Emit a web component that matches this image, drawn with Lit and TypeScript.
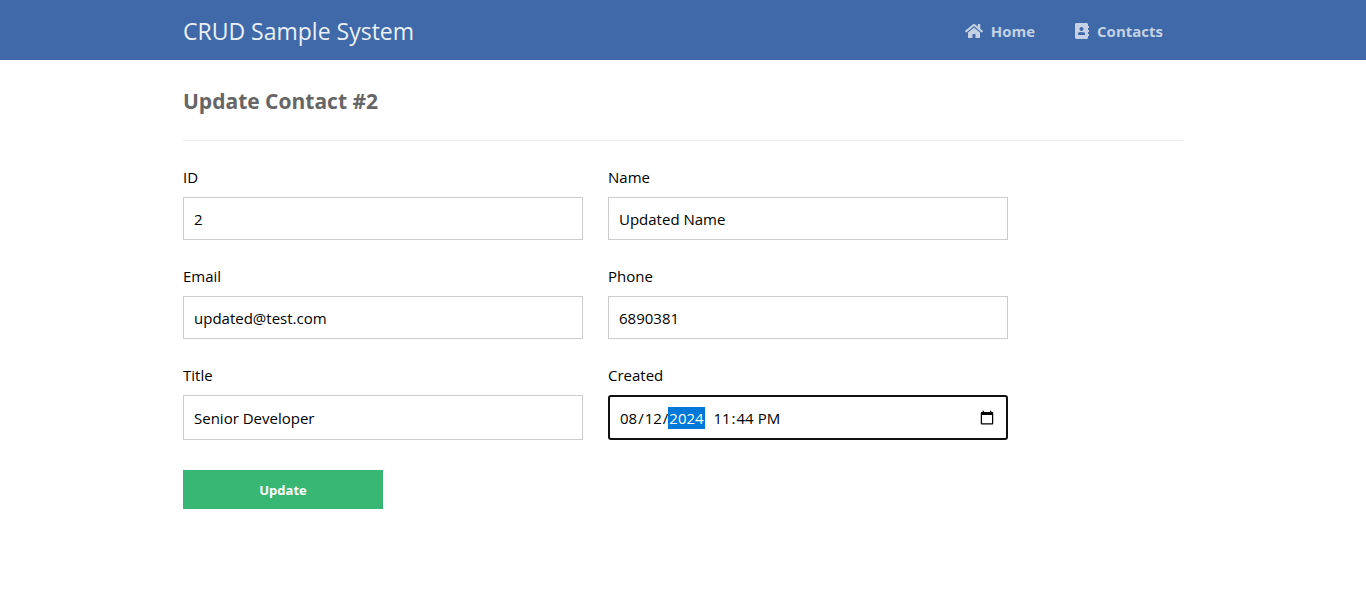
import { LitElement, html, css, svg } from "lit";
import { customElement } from "lit/decorators.js";

const homeIcon = svg`<path d="M280.37 148.26L96 300.11V464a16 16 0 0 0 16 16l112.06-.29a16 16 0 0 0 15.92-16V368a16 16 0 0 1 16-16h64a16 16 0 0 1 16 16v95.64a16 16 0 0 0 16 16.05L464 480a16 16 0 0 0 16-16V300L295.67 148.26a12.19 12.19 0 0 0-15.3 0zM571.6 251.47L488 182.56V44.05a12 12 0 0 0-12-12h-56a12 12 0 0 0-12 12v72.61L318.47 43a48 48 0 0 0-61 0L4.34 251.47a12 12 0 0 0-1.6 16.9l25.5 31A12 12 0 0 0 45.15 301l235.22-193.74a12.19 12.19 0 0 1 15.3 0L530.9 301a12 12 0 0 0 16.9-1.6l25.5-31a12 12 0 0 0-1.7-16.93z"/>`;

const bookIcon = svg`<path d="M436 160c6.6 0 12-5.4 12-12v-40c0-6.6-5.4-12-12-12h-20V48c0-26.5-21.5-48-48-48H48C21.5 0 0 21.5 0 48v416c0 26.5 21.5 48 48 48h320c26.5 0 48-21.5 48-48v-48h20c6.6 0 12-5.4 12-12v-40c0-6.6-5.4-12-12-12h-20v-64h20c6.6 0 12-5.4 12-12v-40c0-6.6-5.4-12-12-12h-20v-64h20zm-228-32c35.3 0 64 28.7 64 64s-28.7 64-64 64-64-28.7-64-64 28.7-64 64-64zm112 236.8c0 10.6-10 19.2-22.4 19.2H118.4C106 384 96 375.4 96 364.8v-19.2c0-31.8 30.1-57.6 67.2-57.6h5c12.3 5.1 25.7 8 39.8 8s27.6-2.9 39.8-8h5c37.1 0 67.2 25.8 67.2 57.6v19.2z"/>`;

interface Field {
  id: string;
  label: string;
  type: string;
  value: string;
}

const fields: Field[] = [
  { id: "id", label: "ID", type: "text", value: "2" },
  { id: "name", label: "Name", type: "text", value: "Updated Name" },
  { id: "email", label: "Email", type: "text", value: "updated@test.com" },
  { id: "phone", label: "Phone", type: "text", value: "6890381" },
  { id: "title", label: "Title", type: "text", value: "Senior Developer" },
  { id: "created", label: "Created", type: "datetime-local", value: "2024-08-12T23:44" },
];

@customElement("app-root")
export class AppRoot extends LitElement {
  static styles = css`
    :host {
      display: block;
      font-family: "Open Sans", "Noto Sans", sans-serif;
      font-size: 15px;
      color: #000;
    }
    * {
      box-sizing: border-box;
    }
    .topbar {
      background: #3f69a8;
    }
    .topbar-inner {
      display: flex;
      align-items: center;
      max-width: 1000px;
      height: 60px;
      margin: 0 auto;
      padding-top: 2px;
    }
    .brand {
      flex: 1;
      margin: 0;
      font-size: 23px;
      font-weight: 400;
      color: #ebf0f6;
    }
    .nav-link {
      display: flex;
      align-items: center;
      gap: 8px;
      padding: 0 20px;
      color: #c5d2e5;
      font-weight: 700;
      text-decoration: none;
    }
    .icon {
      height: 16px;
      fill: currentColor;
    }
    .content {
      max-width: 1000px;
      margin: 0 auto;
    }
    .heading {
      margin: 0;
      padding: 25px 0 23px;
      border-bottom: 1px solid #ebebeb;
      font-size: 21px;
      line-height: 32px;
      font-weight: 700;
      color: #666;
    }
    .form {
      padding: 25px 0 40px;
    }
    .grid {
      display: grid;
      grid-template-columns: repeat(auto-fit, minmax(0, 400px));
      gap: 25px;
    }
    .field {
      display: flex;
      flex-direction: column;
      gap: 9px;
    }
    .label {
      line-height: 22px;
    }
    .input {
      flex: 1;
      width: 100%;
      min-height: 43px;
      padding: 0 10px;
      border: 1px solid #ccc;
      border-radius: 0;
      outline: none;
      background: #fff;
      font: inherit;
      color: #000;
    }
    .input.active {
      min-height: 45px;
      padding: 0 9px;
      border: 2px solid #101010;
      border-radius: 3px;
    }
    /* The white shadow covers the comma between the date and the time. */
    .input::-webkit-datetime-edit-year-field {
      position: relative;
      background: #0078d7;
      box-shadow: 5px 0 0 #fff;
      color: #fff;
    }
    .input::-webkit-calendar-picker-indicator {
      width: 16px;
      height: 16px;
    }
    .submit {
      width: 200px;
      height: 39px;
      margin-top: 30px;
      border: 0;
      background: #38b673;
      font: inherit;
      font-size: 13px;
      font-weight: 700;
      color: #fff;
      cursor: pointer;
    }
  `;

  render() {
    return html`
      <nav class="topbar">
        <div class="topbar-inner">
          <h1 class="brand">CRUD Sample System</h1>
          <a class="nav-link" href="#home"><svg class="icon" viewBox="0 0 576 512" aria-hidden="true">${homeIcon}</svg>Home</a>
          <a class="nav-link" href="#contacts"><svg class="icon" viewBox="0 0 448 512" aria-hidden="true">${bookIcon}</svg>Contacts</a>
        </div>
      </nav>
      <main class="content">
        <h2 class="heading">Update Contact #2</h2>
        <form class="form" @submit=${(e: Event) => e.preventDefault()}>
          <div class="grid">
            ${fields.map(
              (f) => html`<div class="field">
                <label class="label" for=${f.id}>${f.label}</label>
                <input
                  class="input ${f.id === "created" ? "active" : ""}"
                  id=${f.id}
                  name=${f.id}
                  type=${f.type}
                  .value=${f.value}
                />
              </div>`
            )}
          </div>
          <button class="submit" type="submit">Update</button>
        </form>
      </main>
    `;
  }
}
